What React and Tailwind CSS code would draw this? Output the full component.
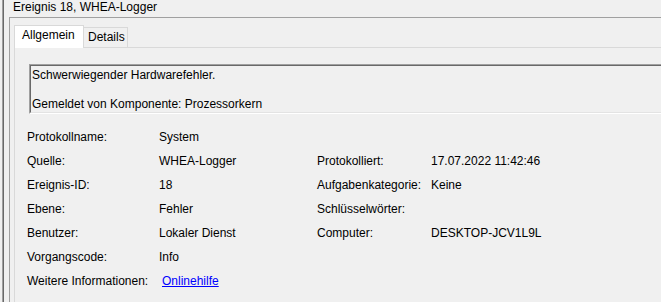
import React from "react";

const rows = [
  ["Protokollname:", "System", "", ""],
  ["Quelle:", "WHEA-Logger", "Protokolliert:", "17.07.2022 11:42:46"],
  ["Ereignis-ID:", "18", "Aufgabenkategorie:", "Keine"],
  ["Ebene:", "Fehler", "Schlüsselwörter:", ""],
  ["Benutzer:", "Lokaler Dienst", "Computer:", "DESKTOP-JCV1L9L"],
  ["Vorgangscode:", "Info", "", ""],
];

const Cell = ({ children }) => (
  <div className="h-[24px] leading-[24px] whitespace-nowrap">{children}</div>
);

export default function App() {
  return (
    <div className="w-[661px] h-[302px] overflow-hidden bg-[#f0f0f0] flex font-['Liberation_Sans',Arial,sans-serif] text-[12px] text-black">
      {/* left window edge */}
      <div className="w-[2px] shrink-0" />
      <div className="w-[1px] shrink-0 bg-[#a0a0a0]" />
      <div className="w-[1px] shrink-0 bg-[#696969]" />

      <div className="flex-1 flex flex-col min-w-0">
        <div className="h-[17px] pl-[9px] leading-[14px] whitespace-nowrap">
          Ereignis 18, WHEA-Logger
        </div>

        <div className="ml-[5px] flex-1 border-t border-l border-[#a0a0a0] pl-[4px] pt-[7px] flex flex-col min-w-0">
          {/* tabs */}
          <div className="flex items-end">
            <div className="relative z-10 -mb-px h-[23px] w-[70px] bg-white border border-b-0 border-[#d9d9d9] pl-[7px] pt-[1px] leading-[16px]">
              Allgemein
            </div>
            <div className="h-[20px] w-[44px] border-t border-r border-[#d9d9d9] pl-[4px] pt-[1px] leading-[16px]">
              Details
            </div>
          </div>

          {/* panel */}
          <div className="flex-1 border-t border-l border-[#d9d9d9] min-w-0">
            <div className="ml-[14px] mt-[16px] border-t border-l border-b border-t-[#a0a0a0] border-l-[#a0a0a0] border-b-white">
              <div className="h-[48px] border-t border-l border-b border-t-[#696969] border-l-[#696969] border-b-[#e3e3e3] pl-[1px] pt-[1px] whitespace-nowrap">
                <div className="leading-[16px]">Schwerwiegender Hardwarefehler.</div>
                <div className="h-[13px]" />
                <div className="leading-[16px]">Gemeldet von Komponente: Prozessorkern</div>
              </div>
            </div>

            <div className="mt-[11px] pl-[12px] grid grid-cols-[132px_158px_114px_1fr]">
              {rows.map((r, i) => (
                <React.Fragment key={i}>
                  <Cell>{r[0]}</Cell>
                  <Cell>{r[1]}</Cell>
                  <Cell>{r[2]}</Cell>
                  <Cell>{r[3]}</Cell>
                </React.Fragment>
              ))}
              <Cell>Weitere Informationen:</Cell>
              <Cell>
                <a href="#" className="ml-[3px] text-[#0000ff] underline">
                  Onlinehilfe
                </a>
              </Cell>
              <Cell />
              <Cell />
            </div>
          </div>
        </div>
      </div>
    </div>
  );
}
